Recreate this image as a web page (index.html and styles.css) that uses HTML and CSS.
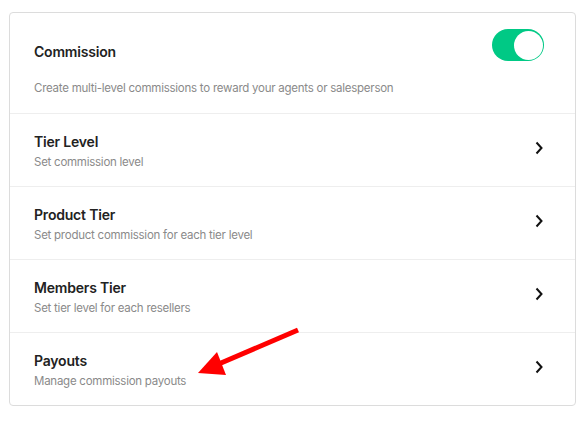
FILE: index.html
```html
<!DOCTYPE html>
<html lang="en">
<head>
    <meta charset="UTF-8">
    <meta name="viewport" content="width=device-width, initial-scale=1.0">
    <title>Commission Settings</title>
    <link rel="stylesheet" href="styles.css">
</head>
<body>
    <div class="card">
        <!-- Commission header with toggle -->
        <div class="card-header">
            <div class="header-top">
                <h2>Commission</h2>
                <div class="toggle on"><span class="knob"></span></div>
            </div>
            <p class="desc">Create multi-level commissions to reward your agents or salesperson</p>
        </div>

        <!-- Settings rows -->
        <a class="row" href="#">
            <div>
                <div class="row-title">Tier Level</div>
                <div class="row-sub">Set commission level</div>
            </div>
            <svg class="chevron" width="8" height="14" viewBox="0 0 8 14"><polyline points="1.5,1.5 6.5,7 1.5,12.5" /></svg>
        </a>
        <a class="row" href="#">
            <div>
                <div class="row-title">Product Tier</div>
                <div class="row-sub">Set product commission for each tier level</div>
            </div>
            <svg class="chevron" width="8" height="14" viewBox="0 0 8 14"><polyline points="1.5,1.5 6.5,7 1.5,12.5" /></svg>
        </a>
        <a class="row" href="#">
            <div>
                <div class="row-title">Members Tier</div>
                <div class="row-sub">Set tier level for each resellers</div>
            </div>
            <svg class="chevron" width="8" height="14" viewBox="0 0 8 14"><polyline points="1.5,1.5 6.5,7 1.5,12.5" /></svg>
        </a>
        <a class="row" href="#">
            <div>
                <div class="row-title">Payouts</div>
                <div class="row-sub">Manage commission payouts</div>
            </div>
            <svg class="chevron" width="8" height="14" viewBox="0 0 8 14"><polyline points="1.5,1.5 6.5,7 1.5,12.5" /></svg>
        </a>
    </div>

    <!-- Annotation arrow pointing at Payouts -->
    <svg class="annotation" width="587" height="424" viewBox="0 0 587 424">
        <line x1="298" y1="330" x2="214" y2="366" stroke="#ff0000" stroke-width="5" />
        <polygon points="198,373 217,352 226,375" fill="#ff0000" />
    </svg>
</body>
</html>
```

FILE: styles.css
```css
body {
    margin: 0;
    padding: 12px 0 0 9px;
    background: #ffffff;
    font-family: Inter, "Noto Sans", sans-serif;
    position: relative;
}

.card {
    width: 567px;
    box-sizing: border-box;
    border: 1px solid #dcdcdc;
    border-radius: 4px;
    background: #ffffff;
}

/* Header */
.card-header {
    padding: 16px 31px 17px 24px;
    border-bottom: 1px solid #eeeeee;
}

.header-top {
    display: flex;
    justify-content: space-between;
    align-items: flex-start;
}

.header-top h2 {
    margin: 13px 0 0 0;
    font-size: 14px;
    line-height: 20px;
    font-weight: 600;
    letter-spacing: -0.2px;
    color: #222222;
}

.desc {
    margin: 18px 0 0 0;
    font-size: 11.5px;
    line-height: 16px;
    letter-spacing: -0.25px;
    color: #8a8a8a;
}

/* Toggle */
.toggle {
    width: 52px;
    height: 32px;
    border-radius: 16px;
    background: #00c985;
    position: relative;
    box-sizing: border-box;
}

.toggle .knob {
    position: absolute;
    top: 1.5px;
    right: 1.5px;
    width: 29px;
    height: 29px;
    border-radius: 50%;
    background: #ffffff;
}

/* Rows */
.row {
    display: flex;
    justify-content: space-between;
    align-items: center;
    padding: 18px 32px 16px 24px;
    border-bottom: 1px solid #eeeeee;
    text-decoration: none;
}

.row:last-child {
    border-bottom: none;
}

.row-title {
    font-size: 14px;
    line-height: 20px;
    font-weight: 600;
    letter-spacing: -0.2px;
    color: #222222;
}

.row-sub {
    margin-top: 2px;
    font-size: 11.5px;
    line-height: 16px;
    letter-spacing: -0.25px;
    color: #8a8a8a;
}

.chevron {
    margin-bottom: 6px;
}

.chevron polyline {
    fill: none;
    stroke: #111111;
    stroke-width: 2;
}

.annotation {
    position: absolute;
    top: 0;
    left: 0;
}
```
